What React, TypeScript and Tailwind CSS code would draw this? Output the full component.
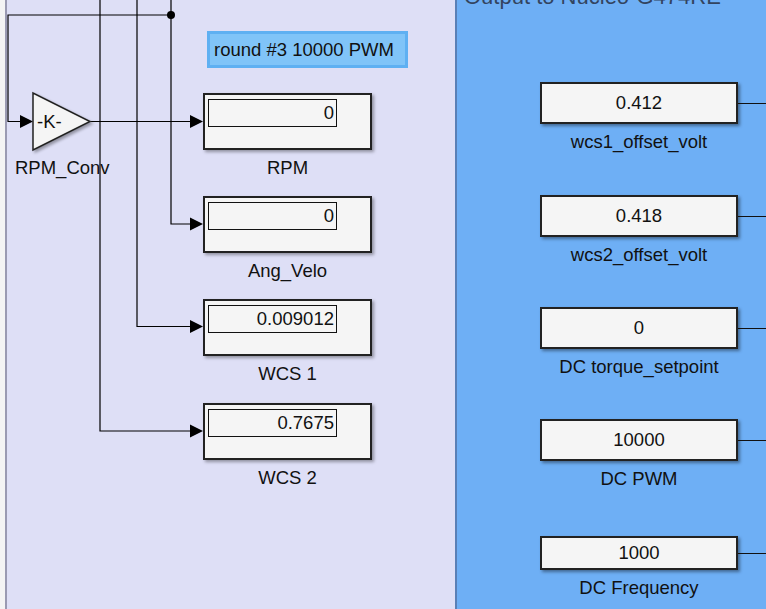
import React from 'react'

const font = { fontFamily: '"Liberation Sans", Arial, sans-serif' }

interface Display {
  value: string
  label: string
  gap: string
}

interface Constant {
  value: string
  label: string
  gap: string
  height: string
}

const displays: Display[] = [
  { value: '0', label: 'RPM', gap: 'mt-[25px]' },
  { value: '0', label: 'Ang_Velo', gap: 'mt-[17px]' },
  { value: '0.009012', label: 'WCS 1', gap: 'mt-[17px]' },
  { value: '0.7675', label: 'WCS 2', gap: 'mt-[18px]' },
]

const constants: Constant[] = [
  { value: '0.412', label: 'wcs1_offset_volt', gap: 'mt-[74px]', height: 'h-[42px]' },
  { value: '0.418', label: 'wcs2_offset_volt', gap: 'mt-[42px]', height: 'h-[42px]' },
  { value: '0', label: 'DC torque_setpoint', gap: 'mt-[41px]', height: 'h-[42px]' },
  { value: '10000', label: 'DC PWM', gap: 'mt-[41px]', height: 'h-[42px]' },
  { value: '1000', label: 'DC Frequency', gap: 'mt-[46px]', height: 'h-[34px]' },
]

const DisplayBlock: React.FC<{ d: Display }> = ({ d }) => (
  <div className={`${d.gap} flex flex-col items-center w-[169px]`}>
    <div className="w-[169px] h-[57px] border-2 border-[#222] bg-[#f5f5f5] shadow-[2px_2px_3px_rgba(0,0,0,0.35)] pl-[3px] pt-[4px]">
      <div className="w-[129px] h-[28px] border border-[#111] bg-[#f5f5f5] flex items-center justify-end pr-[2px] text-[18.5px] text-[#111]">
        {d.value}
      </div>
    </div>
    <div className="mt-[7px] h-[22px] leading-[22px] text-[18.5px] text-[#111]">{d.label}</div>
  </div>
)

const ConstantBlock: React.FC<{ c: Constant }> = ({ c }) => (
  <div className={`${c.gap} flex flex-col`}>
    <div className="flex items-center">
      <div className={`${c.height} w-[198px] border-2 border-[#222] bg-[#f5f5f5] shadow-[2px_2px_3px_rgba(0,0,0,0.4)] flex items-center justify-center text-[18.5px] text-[#111]`}>
        {c.value}
      </div>
      <div className="flex-1 h-px bg-[#111]" />
    </div>
    <div className="mt-[7px] w-[198px] h-[22px] leading-[22px] text-center text-[18.5px] text-[#111]">{c.label}</div>
  </div>
)

const Arrow: React.FC<{ x: number; y: number }> = ({ x, y }) => (
  <polygon points={`${x - 13},${y - 6.5} ${x},${y} ${x - 13},${y + 6.5}`} fill="#000" />
)

const Wires = () => (
  <svg className="absolute inset-0 pointer-events-none" width="766" height="609" viewBox="0 0 766 609">
    <g stroke="#000" strokeWidth="1.2" fill="none">
      <polyline points="171,0 171,224 191,224" />
      <polyline points="137,0 137,326.5 191,326.5" />
      <polyline points="100,0 100,431 191,431" />
      <polyline points="171,15 8,15 8,121.5 21,121.5" />
      <line x1="90" y1="121.5" x2="191" y2="121.5" />
    </g>
    <circle cx="171" cy="15" r="4" fill="#000" />
    <Arrow x={33} y={121.5} />
    <Arrow x={203} y={121.5} />
    <Arrow x={203} y={224} />
    <Arrow x={203} y={326.5} />
    <Arrow x={203} y={431} />
    <defs>
      <filter id="sh" x="-20%" y="-20%" width="140%" height="140%">
        <feDropShadow dx="2" dy="2" stdDeviation="1.5" floodColor="#000" floodOpacity="0.35" />
      </filter>
    </defs>
    <polygon points="33,93 33,150 90,121.5" fill="#f5f5f5" stroke="#222" strokeWidth="1.5" filter="url(#sh)" />
    <text x="37" y="128" fontSize="18.5" fill="#111" style={font}>-K-</text>
    <text x="15" y="174" fontSize="18.5" fill="#111" style={font}>RPM_Conv</text>
  </svg>
)

export default function App() {
  return (
    <div className="relative w-[766px] h-[609px] overflow-hidden flex bg-[#f4f4f4]" style={font}>
      <div className="w-[5px] shrink-0 bg-[#f4f4f4]" />
      <div className="w-[450px] shrink-0 bg-[#dedff6] border-l-2 border-[#9a9ab2] pl-[196px] pt-[31px]">
        <div className="ml-[4px] w-[201px] h-[37px] border-[3px] border-[#5fb0f2] bg-[#80c4f8] pl-[4px] leading-[31px] text-[18.5px] text-[#111] whitespace-nowrap">
          round #3 10000 PWM
        </div>
        <div className="flex flex-col">
          {displays.map((d) => (
            <DisplayBlock key={d.label} d={d} />
          ))}
        </div>
      </div>
      <div className="flex-1 bg-[#6eaff5] border-l-2 border-[#5a80b6] pl-[83px] flex flex-col">
        <div className="-mt-[14px] h-[22px] leading-[22px] -ml-[76px] text-[22px] text-[#33445f] whitespace-nowrap">
          Output to Nucleo-G474RE
        </div>
        {constants.map((c) => (
          <ConstantBlock key={c.label} c={c} />
        ))}
      </div>
      <Wires />
    </div>
  )
}
